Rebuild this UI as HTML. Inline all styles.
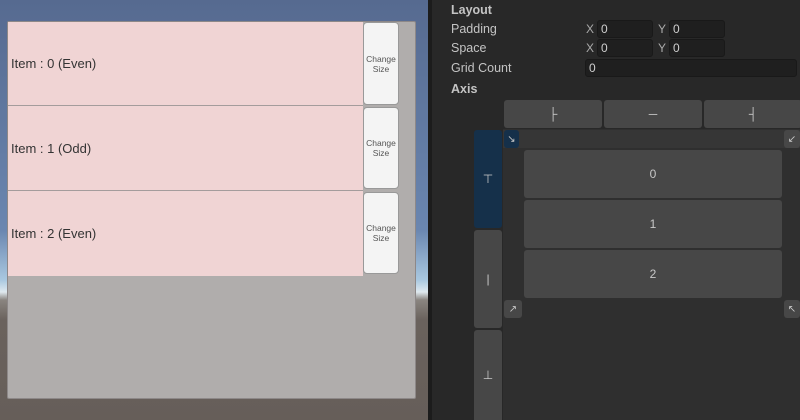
<!DOCTYPE html>
<html><head><style>
*{margin:0;padding:0;box-sizing:border-box}
html,body{width:800px;height:420px;overflow:hidden}
body{position:relative;font-family:"Liberation Sans",sans-serif;background:#282828}
.a{position:absolute}
.sky{left:0;top:0;width:428px;height:420px;background:linear-gradient(#566a90 0px,#6a86b0 230px,#a9c8e0 280px,#dfe9ef 292px,#8a8580 300px,#6a625d 320px,#665e59 420px)}
.panel{left:7px;top:21px;width:409px;height:378px;background:#b0adac;border:1px solid #8d8888;border-radius:2px}
.item{left:8px;width:355px;background:#f0d4d4;border-bottom:1px solid #a49c9c;font-size:13px;color:#333;padding-left:3px;display:flex;align-items:center}
.btn{left:363px;width:36px;background:#f4f4f4;border:1px solid #999;border-radius:4px;font-size:8.5px;color:#555;text-align:center;display:flex;align-items:center;justify-content:center;line-height:10px}
.lbl{color:#c4c4c4;font-size:12.5px;left:451px}
.fld{background:#1f1f1f;border:1px solid #191919;border-radius:3px;height:18px;color:#cfcfcf;font-size:12px;padding-left:3px;line-height:16px}
.xy{color:#aaa;font-size:12px}
.gb{background:#474747;border-radius:3px;color:#c8c8c8;font-size:12px;display:flex;align-items:center;justify-content:center}
</style></head><body>
<div class="a sky"></div>
<div class="a panel"></div>
<div class="a item" style="top:22px;height:84px">Item : 0 (Even)</div>
<div class="a item" style="top:106px;height:85px">Item : 1 (Odd)</div>
<div class="a item" style="top:191px;height:85px;border-bottom:none">Item : 2 (Even)</div>
<div class="a btn" style="top:22px;height:83px">Change<br>Size</div>
<div class="a btn" style="top:107px;height:82px">Change<br>Size</div>
<div class="a btn" style="top:192px;height:82px">Change<br>Size</div>
<div class="a" style="left:428px;top:0;width:4px;height:420px;background:#1c1c1c"></div>
<div class="a lbl" style="top:3px;font-weight:bold">Layout</div>
<div class="a lbl" style="top:22px">Padding</div>
<div class="a lbl" style="top:41px">Space</div>
<div class="a lbl" style="top:61px">Grid Count</div>
<div class="a lbl" style="top:82px;font-weight:bold">Axis</div>
<div class="a xy" style="left:586px;top:22px">X</div><div class="a fld" style="left:597px;top:20px;width:56px">0</div>
<div class="a xy" style="left:658px;top:22px">Y</div><div class="a fld" style="left:669px;top:20px;width:56px">0</div>
<div class="a xy" style="left:586px;top:41px">X</div><div class="a fld" style="left:597px;top:39px;width:56px">0</div>
<div class="a xy" style="left:658px;top:41px">Y</div><div class="a fld" style="left:669px;top:39px;width:56px">0</div>
<div class="a fld" style="left:585px;top:59px;width:212px">0</div>
<div class="a gb" style="left:504px;top:100px;width:98px;height:28px">&#x251C;</div>
<div class="a gb" style="left:604px;top:100px;width:98px;height:28px">&#x2500;</div>
<div class="a gb" style="left:704px;top:100px;width:98px;height:28px">&#x2524;</div>
<div class="a" style="left:503px;top:129px;width:297px;height:291px;background:#2f2f2f"></div>
<div class="a" style="left:503px;top:130px;width:297px;height:18px;background:#363636"></div>
<div class="a gb" style="left:474px;top:130px;width:28px;height:98px;background:#15304a">&#x22A4;</div>
<div class="a gb" style="left:474px;top:230px;width:28px;height:98px">|</div>
<div class="a gb" style="left:474px;top:330px;width:28px;height:90px;border-radius:3px 3px 0 0">&#x22A5;</div>
<div class="a gb" style="left:504px;top:130px;width:15px;height:18px;background:#15304a;font-size:10px">&#x2198;</div>
<div class="a gb" style="left:784px;top:130px;width:16px;height:18px;font-size:10px">&#x2199;</div>
<div class="a gb" style="left:504px;top:300px;width:18px;height:18px;font-size:10px">&#x2197;</div>
<div class="a gb" style="left:784px;top:300px;width:16px;height:18px;font-size:10px">&#x2196;</div>
<div class="a gb" style="left:524px;top:150px;width:258px;height:48px">0</div>
<div class="a gb" style="left:524px;top:200px;width:258px;height:48px">1</div>
<div class="a gb" style="left:524px;top:250px;width:258px;height:48px">2</div>
</body></html>
